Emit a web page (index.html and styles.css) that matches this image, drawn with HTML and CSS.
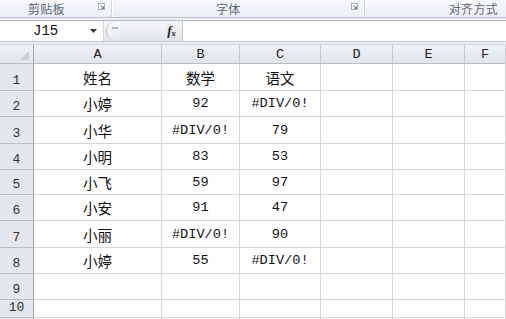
FILE: index.html
```html
<!DOCTYPE html>
<html lang="zh">
<head>
<meta charset="utf-8">
<link rel="stylesheet" href="styles.css">
</head>
<body>
<div class="app">
  <div class="ribbon">
    <div class="group g1"><span class="glabel">剪贴板</span><svg class="launch" width="7" height="7" viewBox="0 0 7 7"><rect x="0.5" y="0.5" width="6" height="6" fill="none" stroke="#a9b3bf"/><path d="M2.5 2.5 L5.5 5.5 M3.5 5.5 H5.5 V3.5" stroke="#6f7c8c" fill="none"/></svg></div>
    <div class="group g2"><span class="glabel">字体</span><svg class="launch" width="7" height="7" viewBox="0 0 7 7"><rect x="0.5" y="0.5" width="6" height="6" fill="none" stroke="#a9b3bf"/><path d="M2.5 2.5 L5.5 5.5 M3.5 5.5 H5.5 V3.5" stroke="#6f7c8c" fill="none"/></svg></div>
    <div class="group g3"><span class="glabel">对齐方式</span></div>
  </div>
  <div class="strip"></div>
  <div class="fbar">
    <div class="namebox"><span class="ref">J15</span><svg class="drop" width="7" height="4" viewBox="0 0 7 4"><path d="M0 0 H7 L3.5 4 Z" fill="#333"/></svg></div>
    <div class="fxzone">
      <div class="grab"><span class="dash"></span></div>
      <span class="fx">f<sub>x</sub></span>
    </div>
    <div class="finput"></div>
  </div>
  <div class="strip2"></div>
  <div class="sheet">
    <div class="corner"><span class="tri"></span></div>
    <div class="ch">A</div><div class="ch">B</div><div class="ch">C</div><div class="ch">D</div><div class="ch">E</div><div class="ch">F</div>

    <div class="rh">1</div><div class="c cj">姓名</div><div class="c cj">数学</div><div class="c cj">语文</div><div class="c"></div><div class="c"></div><div class="c"></div>
    <div class="rh">2</div><div class="c cj">小婷</div><div class="c">92</div><div class="c">#DIV/0!</div><div class="c"></div><div class="c"></div><div class="c"></div>
    <div class="rh">3</div><div class="c cj">小华</div><div class="c">#DIV/0!</div><div class="c">79</div><div class="c"></div><div class="c"></div><div class="c"></div>
    <div class="rh">4</div><div class="c cj">小明</div><div class="c">83</div><div class="c">53</div><div class="c"></div><div class="c"></div><div class="c"></div>
    <div class="rh">5</div><div class="c cj">小飞</div><div class="c">59</div><div class="c">97</div><div class="c"></div><div class="c"></div><div class="c"></div>
    <div class="rh">6</div><div class="c cj">小安</div><div class="c">91</div><div class="c">47</div><div class="c"></div><div class="c"></div><div class="c"></div>
    <div class="rh">7</div><div class="c cj">小丽</div><div class="c">#DIV/0!</div><div class="c">90</div><div class="c"></div><div class="c"></div><div class="c"></div>
    <div class="rh">8</div><div class="c cj">小婷</div><div class="c">55</div><div class="c">#DIV/0!</div><div class="c"></div><div class="c"></div><div class="c"></div>
    <div class="rh">9</div><div class="c"></div><div class="c"></div><div class="c"></div><div class="c"></div><div class="c"></div><div class="c"></div>
    <div class="rh">10</div><div class="c"></div><div class="c"></div><div class="c"></div><div class="c"></div><div class="c"></div><div class="c"></div>
    <div class="rh"></div><div class="c"></div><div class="c"></div><div class="c"></div><div class="c"></div><div class="c"></div><div class="c"></div>
  </div>
</div>
</body>
</html>
```

FILE: styles.css
```css
* { box-sizing: border-box; }
html, body { margin: 0; padding: 0; background: #fff; }
.app {
  width: 506px;
  height: 319px;
  overflow: hidden;
  display: flex;
  flex-direction: column;
  font-family: "Liberation Mono", monospace;
}
.ribbon {
  height: 18px;
  display: flex;
  background: linear-gradient(#f6f8fa, #eceff3);
  border-bottom: 1px solid #b9c1cb;
  flex: none;
}
.group {
  position: relative;
  display: flex;
  align-items: center;
  border-right: 1px solid #d3d9e0;
  box-shadow: 1px 0 0 #ffffff;
}
.g1 { width: 112px; padding-left: 28px; }
.g2 { width: 253px; padding-left: 104px; }
.g3 { flex: 1; border-right: none; box-shadow: none; justify-content: flex-end; padding-right: 8px; }
.glabel {
  font-family: "Noto Sans CJK SC", sans-serif;
  font-size: 12px;
  line-height: 16px;
  color: #5a687a;
  letter-spacing: 0.3px;
}
.launch { position: absolute; right: 6px; top: 3px; }
.strip { height: 2px; background: #eef1f4; flex: none; }
.fbar {
  height: 22px;
  flex: none;
  display: flex;
  border-top: 1px solid #b5bcc6;
  border-bottom: 1px solid #c9ced6;
  background: #fff;
}
.namebox {
  width: 104px;
  display: flex;
  align-items: center;
  padding-left: 33px;
  border-right: 1px solid #d2d7de;
}
.ref { font-size: 14px; color: #111; flex: 1; line-height: 20px; }
.drop { margin-right: 6px; }
.fxzone {
  width: 79px;
  display: flex;
  align-items: center;
  background: linear-gradient(#f4f5f7, #e3e6ea);
  border-right: 1px solid #c4c9d0;
}
.grab {
  width: 14px;
  height: 20px;
  border-left: 1px solid #c0c6ce;
  border-radius: 10px 0 0 10px;
  background: linear-gradient(#fafbfc, #e7eaee);
  margin-left: 2px;
  position: relative;
}
.dash {
  position: absolute;
  left: 5px;
  top: 6px;
  width: 6px;
  height: 2px;
  background: #b2b8c0;
}
.fx {
  margin-left: auto;
  margin-right: 6px;
  font-family: "Liberation Serif", serif;
  font-style: italic;
  font-weight: bold;
  font-size: 13px;
  color: #222;
  line-height: 14px;
}
.fx sub { font-size: 9px; vertical-align: baseline; position: relative; top: 1px; }
.finput { flex: 1; background: #fff; }
.strip2 {
  height: 3px;
  flex: none;
  background: #e9ecf0;
  border-bottom: 1px solid #d4d9df;
}
.sheet {
  flex: none;
  display: grid;
  grid-template-columns: 34px 128px 78px 81px 72px 72px 1fr;
  grid-template-rows: 19px 27px 26px 27px 26px 25px 26px 27px 26px 26px 18px 10px;
}
.corner, .ch, .rh {
  background: linear-gradient(#eef1f5, #e1e5ea);
  border-right: 1px solid #c5cad1;
  border-bottom: 1px solid #b8bfc8;
}
.corner { position: relative; border-right-color: #9da6b1; }
.tri {
  position: absolute;
  right: 4px;
  bottom: 3px;
  width: 0;
  height: 0;
  border-left: 9px solid transparent;
  border-bottom: 9px solid #c9ced5;
}
.ch {
  display: flex;
  align-items: center;
  justify-content: center;
  font-size: 13.5px;
  color: #222;
}
.rh {
  display: flex;
  align-items: flex-end;
  justify-content: center;
  padding-bottom: 2px;
  font-size: 13px;
  color: #333;
  border-right-color: #9da6b1;
  background: #e4e7ec;
}
.c {
  border-right: 1px solid #d6d6d6;
  border-bottom: 1px solid #d6d6d6;
  display: flex;
  align-items: center;
  justify-content: center;
  font-size: 13.6px;
  color: #111;
}
.cj {
  font-family: "Noto Sans CJK SC", sans-serif;
  font-size: 14.5px;
}
```
